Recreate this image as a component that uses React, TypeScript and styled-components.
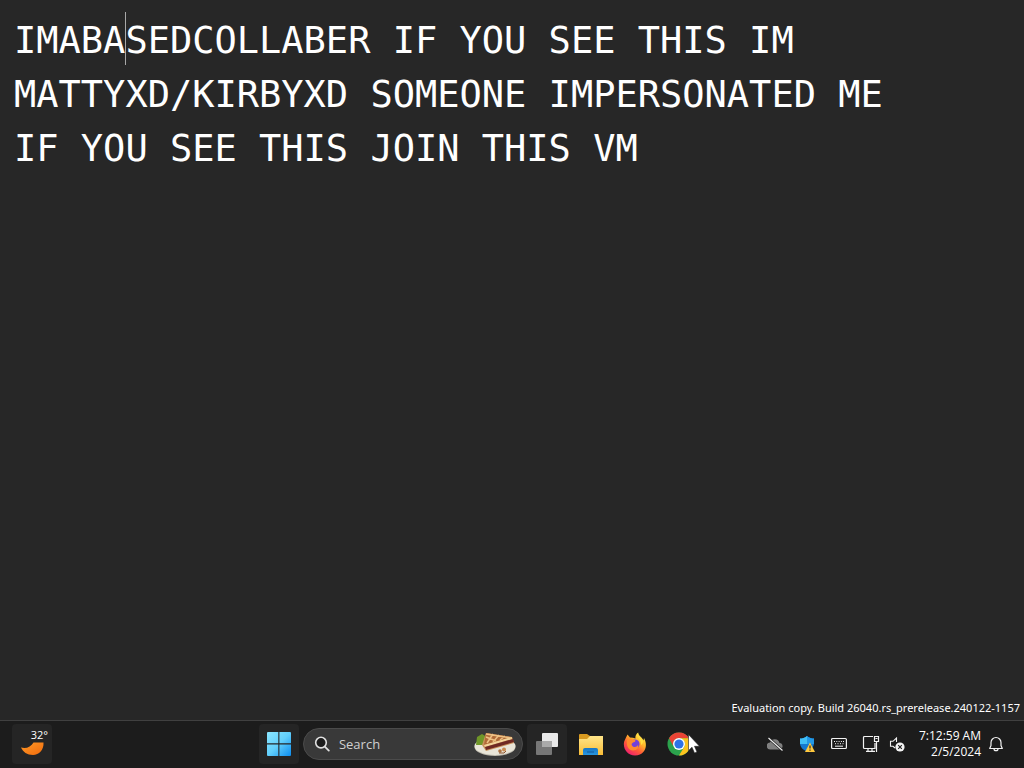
import React from "react";
import styled, { createGlobalStyle } from "styled-components";

const GlobalStyle = createGlobalStyle`
  * { box-sizing: border-box; }
  html, body, #root { height: 100%; }
  body {
    margin: 0;
    background: #272727;
    color: #fff;
    font-family: "Open Sans", "Noto Sans", sans-serif;
  }
  button, input, textarea { font: inherit; color: inherit; border: 0; margin: 0; padding: 0; background: none; outline: none; }
`;

const Desktop = styled.div`
  display: flex;
  flex-direction: column;
  height: 100vh;
  overflow: hidden;
`;

const Editor = styled.main`
  position: relative;
  flex: 1;
  display: flex;
  min-height: 0;
`;

const Note = styled.textarea`
  flex: 1;
  padding: 14px;
  resize: none;
  overflow: hidden;
  font-family: "DejaVu Sans Mono", monospace;
  font-size: 37px;
  line-height: 54px;
  color: #fff;
`;

const Caret = styled.span`
  position: absolute;
  left: 125px;
  top: 12px;
  width: 1px;
  height: 53px;
  background: #a8a8a8;
`;

const Watermark = styled.p`
  position: absolute;
  right: 4px;
  bottom: 4px;
  margin: 0;
  font-family: "Noto Sans", sans-serif;
  font-size: 11px;
  line-height: 16px;
  white-space: nowrap;
`;

const Taskbar = styled.footer`
  display: grid;
  grid-template-columns: minmax(0, 17fr) auto minmax(0, 21fr);
  align-items: center;
  height: 48px;
  padding: 0 20px 1px 12px;
  border-top: 1px solid #404040;
  background: #1c1c1c;
`;

const Apps = styled.nav`
  display: flex;
  align-items: center;
  gap: 4px;
`;

const Tile = styled.button<{ $active?: boolean }>`
  display: flex;
  align-items: center;
  justify-content: center;
  width: 40px;
  height: 40px;
  border-radius: 4px;
  background: ${(p) => (p.$active ? "#252525" : "transparent")};
`;

const WeatherTile = styled(Tile)`
  position: relative;
`;

const Temperature = styled.span`
  position: absolute;
  top: 3px;
  right: 4px;
  font-size: 11px;
  line-height: 16px;
`;

const SearchBox = styled.label`
  display: flex;
  align-items: center;
  gap: 9px;
  width: 220px;
  height: 32px;
  padding: 0 6px 0 10px;
  border: 1px solid #4b4b4b;
  border-radius: 16px;
  background: #393939;
`;

const SearchInput = styled.input`
  flex: 1;
  min-width: 0;
  font-size: 13px;
  line-height: 18px;
  &::placeholder { color: #d0d0d0; opacity: 1; }
`;

const Tray = styled.div`
  display: flex;
  align-items: center;
  justify-content: flex-end;
`;

const TrayButton = styled.button<{ $width: number }>`
  display: flex;
  align-items: center;
  justify-content: center;
  width: ${(p) => p.$width}px;
  height: 40px;
`;

const Clock = styled.button`
  margin: 0 7px 0 12px;
  text-align: right;
  font-size: 12px;
  line-height: 16px;
  white-space: nowrap;
`;

const ClockLine = styled.span`
  display: block;
`;

const Pointer = styled.svg`
  position: fixed;
  left: 688px;
  top: 734px;
  pointer-events: none;
`;

const MoonIcon = () => (
  <svg width="24" height="40" viewBox="0 0 24 40" aria-hidden="true">
    <defs>
      <linearGradient id="moon" x1="0" y1="0" x2="1" y2="1">
        <stop offset="0" stopColor="#ff9a28" />
        <stop offset="1" stopColor="#f06a0c" />
      </linearGradient>
    </defs>
    <path d="M1 23.5C6 25 11 23 13.5 18.5L23.5 18.5C24 26 19 31 13 31C7 31 3 28 1 23.5Z" fill="url(#moon)" />
  </svg>
);

const WindowsIcon = () => (
  <svg width="24" height="24" viewBox="0 0 24 24" aria-hidden="true">
    <defs>
      <linearGradient id="win" gradientUnits="userSpaceOnUse" x1="0" y1="0" x2="24" y2="24">
        <stop offset="0" stopColor="#8be6ff" />
        <stop offset=".5" stopColor="#62cffb" />
        <stop offset="1" stopColor="#0c8df0" />
      </linearGradient>
    </defs>
    <path fill="url(#win)" d="M1 0h10.3v11.3H0V1a1 1 0 0 1 1-1ZM12.4 0H23a1 1 0 0 1 1 1v10.3H12.4ZM0 12.4h11.3V24H1a1 1 0 0 1-1-1ZM12.4 12.4H24V23a1 1 0 0 1-1 1H12.4Z" />
  </svg>
);

const SearchIcon = () => (
  <svg width="16" height="16" viewBox="0 0 16 16" fill="none" aria-hidden="true">
    <circle cx="7" cy="6.6" r="5.3" fill="#1c1c1c" stroke="#e0e0e0" strokeWidth="1.6" />
    <path d="m10.8 10.6 4 4" stroke="#e0e0e0" strokeWidth="1.8" strokeLinecap="round" />
  </svg>
);

const PieIcon = () => (
  <svg width="42" height="26" viewBox="0 0 42 26" aria-hidden="true">
    <ellipse cx="21" cy="16" rx="20.5" ry="9" fill="#bdb9ad" />
    <ellipse cx="21" cy="15" rx="20.5" ry="9" fill="#e9e5d8" />
    <path d="M2 14 3 6l5-3 5 3-4 8Z" fill="#6f9628" />
    <path d="M12 2 38 6 40 12 12 20 8 14Z" fill="#c9935c" />
    <path d="M12 2 38 6 10 14Z" fill="#b06a38" />
    <path d="m10 14 28-8v2L11 16Z" fill="#f2d49b" />
    <path d="m11 16 28-8 1 3-28 8Z" fill="#6f2924" />
    <path d="m12 3 26 4M19 3l-6 9m12-8-6 7m12-6-5 4m-14-3 10 4" stroke="#edc184" strokeWidth="1.5" />
    <circle cx="26" cy="20" r="1.8" fill="#ad7240" />
    <circle cx="30" cy="18.500" r="2" fill="#c98a50" />
    <path d="m25 22 5 0 2-2" stroke="#8b522d" fill="none" />
  </svg>
);

const TaskViewIcon = () => (
  <svg width="24" height="24" viewBox="0 0 24 24" aria-hidden="true">
    <rect x="7" y="1" width="16" height="14" rx="1" fill="#e9e9e9" />
    <rect x="1" y="9" width="16" height="14" rx="1" fill="#777" />
    <path d="M7 9h10v6H7Z" fill="#aaa" />
  </svg>
);

const FolderIcon = () => (
  <svg width="26" height="24" viewBox="0 0 26 24" aria-hidden="true">
    <defs>
      <linearGradient id="folder" x1="0" y1="0" x2="0" y2="1">
        <stop offset="0" stopColor="#ffe58a" />
        <stop offset="1" stopColor="#f9bd36" />
      </linearGradient>
      <linearGradient id="pocket" x1="0" y1="0" x2="0" y2="1">
        <stop offset="0" stopColor="#1676c6" />
        <stop offset="1" stopColor="#2896df" />
      </linearGradient>
    </defs>
    <path d="M1 3a1 1 0 0 1 1-1h7l3 2h12a1 1 0 0 1 1 1v6H1Z" fill="#d99a20" />
    <path d="M1 7h8l3-3h13v19H1Z" fill="url(#folder)" />
    <path d="M5 23v-5a2 2 0 0 1 2-2h11a2 2 0 0 1 2 2v5Z" fill="url(#pocket)" />
    <path d="M9 20h7" stroke="#125999" />
  </svg>
);

const FirefoxIcon = () => (
  <svg width="24" height="24" viewBox="0 0 24 24" aria-hidden="true">
    <defs>
      <linearGradient id="fox" gradientUnits="userSpaceOnUse" x1="19" y1="2" x2="5" y2="22">
        <stop offset="0" stopColor="#fff04b" />
        <stop offset=".35" stopColor="#ffb42a" />
        <stop offset=".65" stopColor="#ff5b36" />
        <stop offset="1" stopColor="#ef1d70" />
      </linearGradient>
    </defs>
    <path d="M4.5 2.500 7 5.500 10 5.800 12.500 6.500C12 4 13 2 15.2.5 15.5 4 19 5 20.5 8.5L21 6C25 13 23 23 12 23.5 4 23.5-.5 16 1.2 9.500L3 5.500Z" fill="url(#fox)" />
    <circle cx="12" cy="12" r="4.6" fill="#7340d8" />
    <path d="M4 8c3-2 5 0 8 0 1 1 0 2-2 2.5-1 1-2 1.500-1 3 2 3 6 1 6-1 1 3-1 6-5 6-4 0-7-4-6-10.500Z" fill="#ff8b2d" />
    <path d="M14 1c-1 4 5 7 4 12 2-1 2-3 2-4-1-3-5-4-6-8Z" fill="#ffde42" />
  </svg>
);

const ChromeIcon = () => (
  <svg width="24" height="24" viewBox="0 0 24 24" aria-hidden="true">
    <circle cx="12" cy="12" r="11.500" fill="#2ba24c" />
    <path d="M2 6.200A11.500 11.500 0 0 1 22 6.200H12A6 6 0 0 0 6.800 15Z" fill="#e94335" />
    <path d="M22 6.200A11.500 11.500 0 0 1 12 23.500L17.200 15A6 6 0 0 0 12 6.200Z" fill="#fcc31e" />
    <circle cx="12" cy="12" r="6" fill="#fff" />
    <circle cx="12" cy="12" r="4.600" fill="#2d73e8" />
  </svg>
);

const CloudOffIcon = () => (
  <svg width="16" height="16" viewBox="0 0 16 16" aria-hidden="true">
    <path d="M3.500 13.500a3.500 3.500 0 0 1-.5-7 5 5 0 0 1 9.500.5 3.300 3.300 0 0 1 .5 6.500Z" fill="#808080" />
    <path d="M2 2.500 15 14" stroke="#1c1c1c" strokeWidth="2.400" />
    <path d="M1.500 2 15.500 14.500" stroke="#eee" strokeWidth="1.200" />
  </svg>
);

const ShieldIcon = () => (
  <svg width="16" height="16" viewBox="0 0 16 16" aria-hidden="true">
    <path d="M8 0C6 2 3 2.500 1 2.500V7c0 4 3 7 7 8.500 4-1.500 7-4.500 7-8.500V2.500C13 2.500 10 2 8 0Z" fill="#1479d0" />
    <path d="M8 0C6 2 3 2.500 1 2.500V8h7Z" fill="#40bff5" />
    <path d="M8 8h7V2.500C13 2.500 10 2 8 0Z" fill="#2298e6" />
    <path d="M11 6.500 16 16H6Z" fill="#ffc83d" />
    <path d="M11 9.500v3m0 1v1.300" stroke="#272727" strokeWidth="1.200" />
  </svg>
);

const KeyboardIcon = () => (
  <svg width="16" height="16" viewBox="0 0 16 16" fill="none" stroke="#f2f2f2" aria-hidden="true">
    <rect x=".6" y="2.500" width="14.800" height="10" rx="1" strokeWidth="1.200" />
    <path d="M3 5.500h1m1.300 0h1m1.300 0h1m1.300 0h1M12 5.500h1M4 7.700h1m1.500 0h1M9 7.700h1m1.500 0h1M4 10.200h8" />
  </svg>
);

const NetworkIcon = () => (
  <svg width="18" height="18" viewBox="0 0 18 18" fill="none" stroke="#f2f2f2" strokeWidth="1.200" aria-hidden="true">
    <path d="M11 1.500H2.500a1 1 0 0 0-1 1v10a1 1 0 0 0 1 1H13V8M6 13.500V16m4-2.500V16M4 16.400h9" />
    <path d="M12.500 1.500h4v5h-4ZM14.500 6.500V17M13.500 3.500h2" />
  </svg>
);

const SpeakerOffIcon = () => (
  <svg width="16" height="16" viewBox="0 0 16 16" fill="none" aria-hidden="true">
    <path d="M7.500 6V2L4 5.300H1.500v5H4L6 12" stroke="#f2f2f2" strokeWidth="1.100" />
    <circle cx="11" cy="11" r="4.600" fill="#f4f4f4" />
    <path d="m9.200 9.200 3.600 3.600m0-3.600-3.600 3.600" stroke="#1c1c1c" strokeWidth="1.100" />
  </svg>
);

const BellIcon = () => (
  <svg width="16" height="16" viewBox="0 0 16 16" fill="none" stroke="#f2f2f2" strokeWidth="1.200" aria-hidden="true">
    <path d="M1.700 12.500h12.600L13 9.500v-3a5 5 0 0 0-10 0v3ZM6 12.700a2 2 0 0 0 4 0" strokeLinejoin="round" />
  </svg>
);

const noteText = [
  "IMABASEDCOLLABER IF YOU SEE THIS IM",
  "MATTYXD/KIRBYXD SOMEONE IMPERSONATED ME",
  "IF YOU SEE THIS JOIN THIS VM",
].join("\n");

export default function App() {
  return (
    <>
      <GlobalStyle />
      <Desktop>
        <Editor>
          <Note aria-label="Note" spellCheck={false} defaultValue={noteText} />
          <Caret />
          <Watermark>Evaluation copy. Build 26040.rs_prerelease.240122-1157</Watermark>
        </Editor>
        <Taskbar>
          <WeatherTile $active aria-label="Weather, 32°">
            <MoonIcon />
            <Temperature>32°</Temperature>
          </WeatherTile>
          <Apps aria-label="Taskbar">
            <Tile $active aria-label="Start"><WindowsIcon /></Tile>
            <SearchBox>
              <SearchIcon />
              <SearchInput type="text" placeholder="Search" aria-label="Search" />
              <PieIcon />
            </SearchBox>
            <Tile $active aria-label="Task view"><TaskViewIcon /></Tile>
            <Tile aria-label="File Explorer"><FolderIcon /></Tile>
            <Tile aria-label="Firefox"><FirefoxIcon /></Tile>
            <Tile aria-label="Chrome"><ChromeIcon /></Tile>
          </Apps>
          <Tray>
            <TrayButton $width={32} aria-label="OneDrive"><CloudOffIcon /></TrayButton>
            <TrayButton $width={32} aria-label="Windows Security"><ShieldIcon /></TrayButton>
            <TrayButton $width={32} aria-label="Touch keyboard"><KeyboardIcon /></TrayButton>
            <TrayButton $width={32} aria-label="Network"><NetworkIcon /></TrayButton>
            <TrayButton $width={20} aria-label="Volume"><SpeakerOffIcon /></TrayButton>
            <Clock>
              <ClockLine>7:12:59 AM</ClockLine>
              <ClockLine>2/5/2024</ClockLine>
            </Clock>
            <TrayButton $width={16} aria-label="Notifications"><BellIcon /></TrayButton>
          </Tray>
        </Taskbar>
      </Desktop>
      <Pointer width="12" height="20" viewBox="0 0 12 20" aria-hidden="true">
        <path d="M.5.5V16.500L4 13.200 6.500 19 9 18 6.500 12.300H11.500Z" fill="#fff" stroke="#222" strokeWidth=".6" />
      </Pointer>
    </>
  );
}
